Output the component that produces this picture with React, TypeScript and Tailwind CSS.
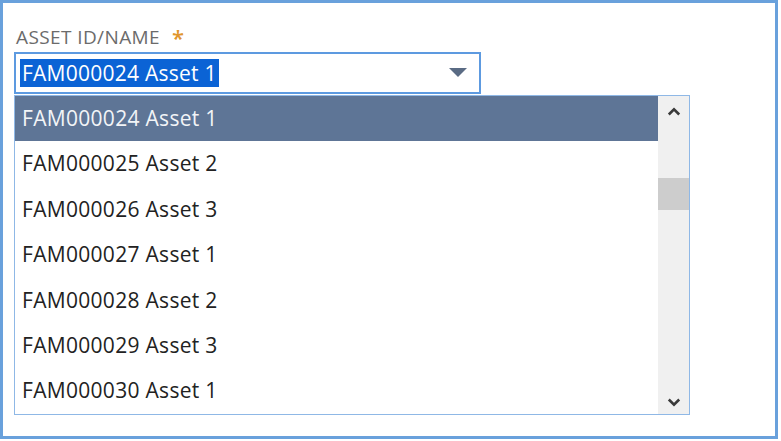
const OPTIONS = [
  'FAM000024 Asset 1',
  'FAM000025 Asset 2',
  'FAM000026 Asset 3',
  'FAM000027 Asset 1',
  'FAM000028 Asset 2',
  'FAM000029 Asset 3',
  'FAM000030 Asset 1',
]

export default function App() {
  return (
    <div className="w-[781px] h-[441px] bg-white font-['Open_Sans',sans-serif]">
      <div className="w-[778px] h-[439px] border-[3px] border-[#69a1dc] pl-[11px] pt-[22px]">
        <div className="flex items-center gap-[12px] pl-[2px] text-[19px] tracking-[0.4px] leading-[24px] text-[#6b6b6b]">
          <span>ASSET ID/NAME</span>
          <span className="text-[#e0952c] text-[22px] font-semibold">*</span>
        </div>
        <div className="mt-[3px] w-[467px] h-[42px] border-2 border-[#5d9ae0] flex items-center justify-between pl-[4px] pr-[10px]">
          <span className="bg-[#0b63d5] text-white text-[21px] tracking-[0.25px] leading-[28px] px-[2px]">FAM000024 Asset 1</span>
          <svg width="18" height="10" viewBox="0 0 18 10" className="mr-[2px]">
            <path d="M0 0 H18 L9 9 Z" fill="#5a6b84" />
          </svg>
        </div>
        <div className="mt-[1px] w-[676px] h-[320px] border border-[#8fb8e6] flex">
          <ul className="flex-1 flex flex-col">
            {OPTIONS.map((opt, i) => (
              <li
                key={opt}
                className={
                  i === 0
                    ? 'h-[45.5px] flex items-center pl-[7px] text-[21px] tracking-[0.3px] bg-[#5e7596] text-[#f2f4f7]'
                    : 'h-[45.5px] flex items-center pl-[7px] text-[21px] tracking-[0.3px] text-[#222222]'
                }
              >
                {opt}
              </li>
            ))}
          </ul>
          <div className="w-[31px] bg-[#f0f0f0] flex flex-col items-center">
            <svg width="14" height="9" viewBox="0 0 14 9" className="mt-[11px]">
              <path d="M1.8 7.5 L7 2.3 L12.2 7.5" fill="none" stroke="#3a3a3a" strokeWidth="2.6" />
            </svg>
            <div className="mt-[62px] w-full h-[32px] bg-[#cdcdcd]" />
            <div className="flex-1" />
            <svg width="14" height="9" viewBox="0 0 14 9" className="mb-[7px]">
              <path d="M1.8 1.5 L7 6.7 L12.2 1.5" fill="none" stroke="#3a3a3a" strokeWidth="2.6" />
            </svg>
          </div>
        </div>
      </div>
    </div>
  )
}
